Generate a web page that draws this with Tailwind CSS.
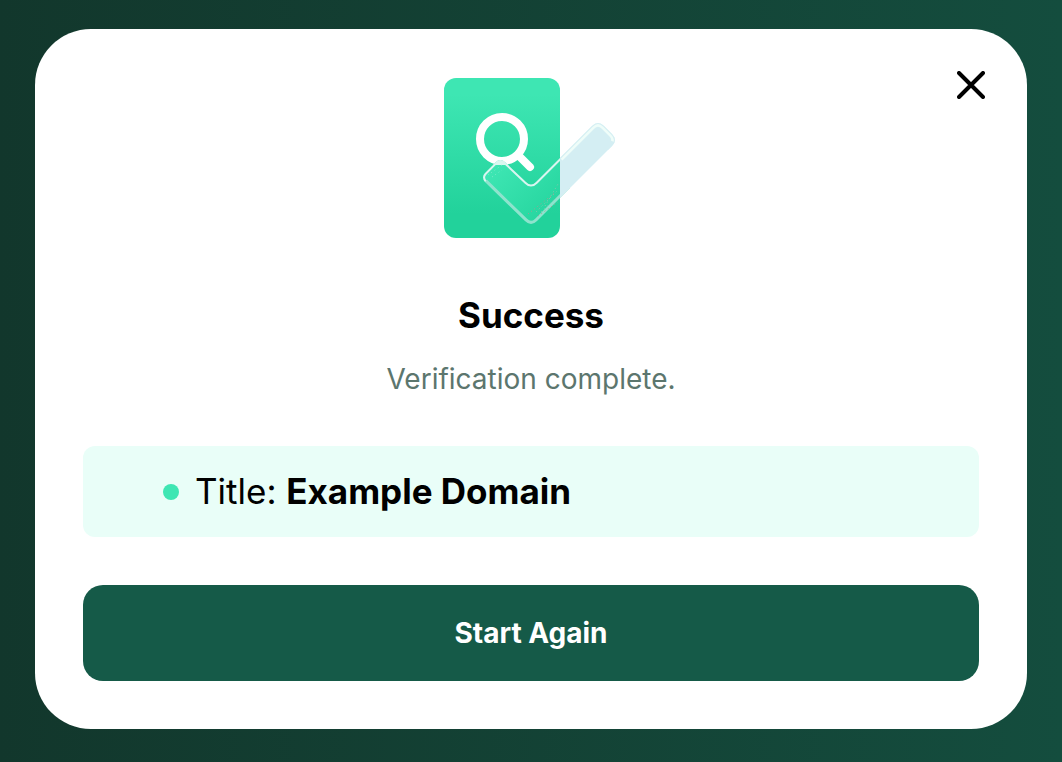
<!DOCTYPE html>
<html lang="en">
<head>
  <meta charset="UTF-8" />
  <meta name="viewport" content="width=device-width, initial-scale=1" />
  <title>Success</title>
  <script src="https://cdn.jsdelivr.net/npm/@tailwindcss/browser@4"></script>
</head>
<body class="min-h-screen bg-linear-to-r from-[#12372c] to-[#144d3e] px-[35px] py-[29px] font-['Inter',sans-serif] text-black">
  <main class="relative flex flex-col rounded-[56px] bg-white px-12 pt-[49px] pb-12">
    <button type="button" aria-label="Close" class="absolute top-9 right-9 flex size-10 items-center justify-center">
      <svg class="size-7" viewBox="0 0 28 28" fill="none" stroke="#000" stroke-width="4" stroke-linecap="round">
        <path d="M2 2L26 26M26 2L2 26" />
      </svg>
    </button>

    <!-- Document with search icon and glass check mark -->
    <svg class="mx-auto h-40 w-[174px]" viewBox="0 0 174 160" fill="none" aria-hidden="true">
      <defs>
        <linearGradient id="doc" x1="58" y1="0" x2="58" y2="160" gradientUnits="userSpaceOnUse">
          <stop offset="0.1" stop-color="#3ee6b3" />
          <stop offset="0.85" stop-color="#22d29b" />
        </linearGradient>
        <linearGradient id="glass" x1="48" y1="90" x2="98" y2="140" gradientUnits="userSpaceOnUse">
          <stop stop-color="#3ee6b3" />
          <stop offset="1" stop-color="#27d6a0" />
        </linearGradient>
        <clipPath id="checkClip">
          <path d="M41 95L51 85Q56 79 62 85L82 104Q87 109 92 104L148 48Q154 42 160 48L168 56Q174 62 168 68L93 143Q87 149 81 143L41 104Q37 99 41 95Z" />
        </clipPath>
      </defs>
      <rect width="116" height="160" rx="12" fill="url(#doc)" />
      <circle cx="58" cy="61" r="22" stroke="#fff" stroke-width="8" />
      <path d="M75 78L86 89" stroke="#fff" stroke-width="8" stroke-linecap="round" />
      <g clip-path="url(#checkClip)">
        <rect x="30" y="35" width="86" height="120" fill="url(#glass)" />
        <path d="M51 85Q56 79 62 85L65 87H48Z" fill="#d9f8ef" />
        <path d="M41 104L81 143Q87 149 93 143L126 110" stroke="#8ee3cd" stroke-width="6" />
        <path d="M41 104Q37 99 41 95L51 85Q56 79 62 85L82 104Q87 109 92 104L126 70" stroke="#d9f5f0" stroke-width="4" />
        <rect x="116" y="35" width="58" height="120" fill="#d4eef3" />
        <path d="M116 80L148 48Q154 42 160 48L168 56Q172 60 170 64" stroke="#effdf9" stroke-width="7" />
        <path d="M116 80L148 48Q154 42 160 48L168 56Q174 62 168 68L164 72" stroke="#d4eef3" stroke-width="2" />
      </g>
      <!-- Grain on the lower bend -->
      <g stroke-width="1" stroke-dasharray="1 3">
        <path d="M92 134L114 112M97 134L114 118M101 128L114 106" stroke="#8dc5ad" />
        <path d="M84 136L112 114M94 138L114 124" stroke="#a99b91" />
        <path d="M44 97L58 87M48 99L58 92" stroke="#7aebc9" />
      </g>
    </svg>

    <h1 class="mt-[55px] text-center text-[35px] leading-[44px] font-bold">Success</h1>
    <p class="mt-5 text-center text-[28px] leading-[44px] text-[#5c766e]">Verification complete.</p>

    <ul class="mt-[45px] rounded-xl bg-[#e9fef8] px-20 py-6">
      <li class="flex items-center gap-4 text-[35px] leading-[43px]">
        <span class="size-4 shrink-0 rounded-full bg-[#3ee6b3]"></span>
        <span>Title: <strong class="font-bold">Example Domain</strong></span>
      </li>
    </ul>

    <button type="button" class="mt-12 h-24 rounded-[20px] bg-[#155a48] text-[28px] font-bold text-white">Start Again</button>
  </main>
</body>
</html>
